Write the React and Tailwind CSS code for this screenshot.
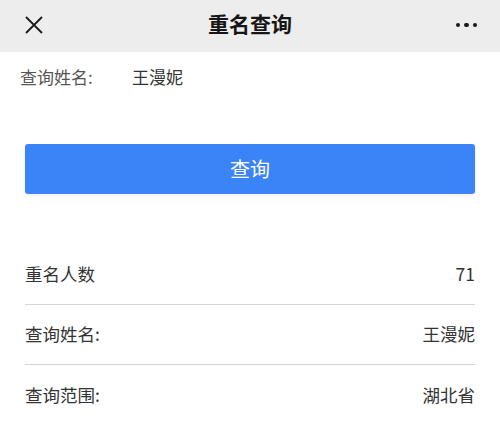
import React from 'react'

const rows = [
  { label: '重名人数', value: '71' },
  { label: '查询姓名:', value: '王漫妮' },
  { label: '查询范围:', value: '湖北省' },
]

export default function App() {
  return (
    <div className="w-[500px] h-[423px] bg-white overflow-hidden font-['Noto_Sans_CJK_SC',sans-serif]">
      {/* Nav bar */}
      <div className="relative flex items-center justify-between h-[52px] px-[24px] bg-[#ededed]">
        <svg width="20" height="20" viewBox="0 0 20 20" className="mt-[-2px]">
          <path d="M2 2 L18 18 M18 2 L2 18" stroke="#1a1a1a" strokeWidth="1.8" fill="none" />
        </svg>
        <h1 className="absolute left-1/2 top-[5px] -translate-x-1/2 text-[21px] font-bold text-[#161616] leading-[36px]">重名查询</h1>
        <div className="flex items-center gap-[4px] mr-[-1px] mt-[-2px]">
          <span className="w-[4.5px] h-[4.5px] rounded-full bg-[#1a1a1a]" />
          <span className="w-[4.5px] h-[4.5px] rounded-full bg-[#1a1a1a]" />
          <span className="w-[4.5px] h-[4.5px] rounded-full bg-[#1a1a1a]" />
        </div>
      </div>

      {/* Name line */}
      <div className="flex items-center h-[50px] px-[20px] text-[17px] text-[#555]">
        <span className="w-[112px]">查询姓名:</span>
        <span className="text-[#333]">王漫妮</span>
      </div>

      {/* Button */}
      <div className="px-[25px] pt-[42px]">
        <button className="w-full h-[50px] rounded-[3px] bg-[#3a84f7] text-white text-[20px] shadow-[0_2px_4px_rgba(0,0,0,0.06)]">
          查询
        </button>
      </div>

      {/* Results */}
      <div className="px-[25px] pt-[51px]">
        {rows.map((r, i) => (
          <div
            key={i}
            className={`flex items-center justify-between h-[60px] text-[17.5px] text-[#333] ${i < rows.length - 1 ? 'border-b border-[#d6d6d6]' : ''}`}
          >
            <span>{r.label}</span>
            <span>{r.value}</span>
          </div>
        ))}
      </div>
    </div>
  )
}
